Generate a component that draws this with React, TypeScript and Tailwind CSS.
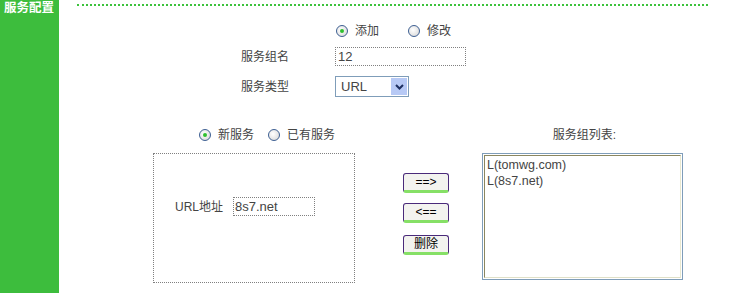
import React from 'react';

const font = "font-['Liberation_Sans','Noto_Sans_CJK_SC',sans-serif]";

const Radio: React.FC<{ checked?: boolean; label: string }> = ({ checked, label }) => (
    <label className="flex items-center gap-[7px]">
        <span className="flex h-[12px] w-[12px] items-center justify-center rounded-full border border-[#3d5f92] bg-[radial-gradient(circle_at_40%_40%,#ffffff,#d4d4d4)]">
            {checked && <span className="h-[4px] w-[4px] rounded-full bg-[#2fc02f]" />}
        </span>
        <span>{label}</span>
    </label>
);

const Btn: React.FC<{ children: React.ReactNode }> = ({ children }) => (
    <button className="flex h-[20px] w-[46px] items-center justify-center rounded-[3px] border border-[#4a2a7a] border-b-[3px] border-b-[#86e066] bg-[#f3f3ef] text-[12px] leading-none text-black">
        {children}
    </button>
);

const App: React.FC = () => {
    return (
        <div className={`flex h-[293px] w-[731px] bg-white text-[12px] text-[#444] ${font}`}>
            <div className="h-full w-[59px] shrink-0 bg-[#3dbd3d] pl-[4px] pt-[1px]">
                <div className="text-[12.5px] font-bold leading-[15px] text-white">服务配置</div>
            </div>

            <div className="flex-1 pt-[4px]">
                <div className="ml-[18px] mr-[23px] border-t-2 border-dotted border-[#3cc23c]" />

                <div className="ml-[277px] mt-[17px] flex h-[16px] items-center gap-[29px]">
                    <Radio checked label="添加" />
                    <Radio label="修改" />
                </div>

                <div className="mt-[8px] flex h-[19px] items-center">
                    <span className="ml-[182px] w-[94px]">服务组名</span>
                    <div className="flex h-[19px] w-[131px] items-center border border-dotted border-[#808080] pl-[2px] text-[13px]">12</div>
                </div>

                <div className="mt-[10px] flex h-[21px] items-center">
                    <span className="ml-[182px] w-[94px]">服务类型</span>
                    <div className="flex h-[21px] w-[74px] items-center border border-[#7f9db9] pl-[5px] pr-[1px] text-[13px]">
                        <span className="flex-1">URL</span>
                        <span className="flex h-[17px] w-[16px] items-center justify-center bg-[#b7c9f5]">
                            <svg width="9" height="6" viewBox="0 0 9 6">
                                <path d="M1 1 L4.5 4.5 L8 1" fill="none" stroke="#1d2f60" strokeWidth="2" />
                            </svg>
                        </span>
                    </div>
                </div>

                <div className="ml-[94px] mt-[30px] flex">
                    <div className="w-[202px]">
                        <div className="ml-[46px] flex h-[16px] items-center gap-[14px]">
                            <Radio checked label="新服务" />
                            <Radio label="已有服务" />
                        </div>
                        <div className="mt-[10px] h-[130px] border border-dotted border-[#808080] pl-[21px] pt-[43px]">
                            <div className="flex h-[19px] items-center">
                                <span className="w-[58px]">URL地址</span>
                                <div className="flex h-[19px] w-[82px] items-center border border-dotted border-[#808080] pl-[1px] text-[13px]">8s7.net</div>
                            </div>
                        </div>
                    </div>

                    <div className="ml-[48px] flex flex-col pt-[46px]">
                        <Btn>==&gt;</Btn>
                        <div className="mt-[10px]"><Btn>&lt;==</Btn></div>
                        <div className="mt-[12px]"><Btn>删除</Btn></div>
                    </div>

                    <div className="ml-[33px] w-[201px]">
                        <div className="flex h-[16px] items-center justify-center pl-[4px]">服务组列表:</div>
                        <div className="mt-[10px] h-[127px] border border-[#7f9db9] p-[1px]">
                            <div className="h-full border border-[#8b8760] border-b-[#e0e0c8] border-r-[#e8e8d0] pl-[2px] pt-[1px] text-[12.5px] leading-[16px]">
                                <div>L(tomwg.com)</div>
                                <div>L(8s7.net)</div>
                            </div>
                        </div>
                    </div>
                </div>
            </div>
        </div>
    );
};

export default App;
